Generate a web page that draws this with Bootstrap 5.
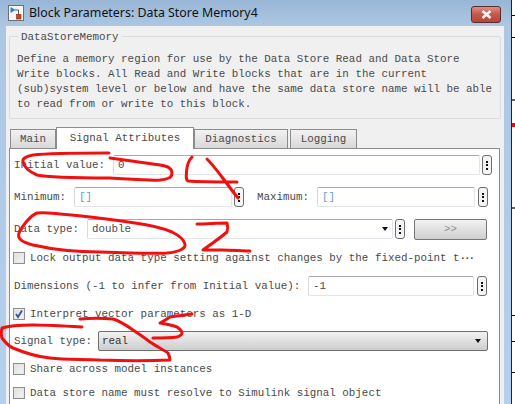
<!DOCTYPE html>
<html lang="en">
<head>
  <meta charset="UTF-8">
  <title>Block Parameters: Data Store Memory4</title>
  <meta name="viewport" content="width=device-width, initial-scale=1">
  <link href="https://cdn.jsdelivr.net/npm/bootstrap@5.3.3/dist/css/bootstrap.min.css" rel="stylesheet">
  <style>
    html, body { height: 404px; overflow: hidden; background: #fff; }
    body { position: relative; font-family: "Liberation Mono", "DejaVu Sans Mono", monospace; font-size: 10.85px; color: #4a4a4a; }
    .dlg-win { width: 511px; height: 404px; overflow: hidden; padding: 0 7px 0 6px; background: linear-gradient(180deg, #98b6d6 0, #adc7e2 26px, #b5d0ec 100%); }
    .dlg-title { height: 26px; padding-left: 2px; gap: 5px; font-family: "Noto Sans", sans-serif; font-size: 12.4px; color: #111; }
    .dlg-close { width: 30px; height: 17px; margin: 3px 3px 0 auto; border: 1px solid #5a2c2c; border-radius: 3px; background: linear-gradient(180deg, #dd8f84 0, #c4584a 50%, #b8463a 100%); }
    .dlg-body { height: 378px; background: #f0f0f0; padding: 10px 3px 0 3px; width: 498px; }
    .grp-box { height: 83px; border: 1px solid #d8dce0; border-radius: 2px; position: relative; padding: 15px 0 0 7px; line-height: 15px; white-space: pre; }
    .grp-title { position: absolute; top: -7px; left: 8px; padding: 0 3px; background: #f0f0f0; line-height: 14px; }
    .tab-row { height: 21px; margin-top: 8px; align-items: flex-end; padding-left: 1px; }
    .tab-item { height: 19px; background: linear-gradient(180deg, #f2f2f2, #d8d8d8); border: 1px solid #8c8c8c; border-bottom: 0; text-align: center; line-height: 18px; }
    .tab-on { height: 22px; background: #fff; position: relative; z-index: 2; margin-bottom: -1px; line-height: 20px; }
    .tab-main { width: 46px; }
    .tab-sig { width: 138px; }
    .tab-diag { width: 94px; }
    .tab-log { width: 67px; margin-left: 2px; }
    .tab-page { background: #fff; border: 1px solid #8c8c8c; border-bottom: 0; width: 491px; height: 258px; padding: 6px 0 0 4px; }
    .fld-row { height: 20px; align-items: center; white-space: pre; }
    .fld-in { height: 20px; background: #fff; border: 1px solid #b4b4b4; border-color: #a8a8a8 #e2e6ea #e2e6ea #d6dade; border-radius: 2px; padding-left: 4px; line-height: 18px; flex: none; }
    .val-blue { color: #5f9fc8; }
    .dots-btn { width: 10px; height: 20px; margin-left: 2px; border: 1px solid #6e6e6e; border-radius: 3px; background: #f4f4f4; flex: none; align-items: center; justify-content: space-evenly; padding: 3px 0; }
    .dots-far { margin-left: 3px; }
    .dots-btn i { display: block; width: 2px; height: 2px; background: #111; }
    .chk-box { width: 12px; height: 12px; flex: none; border: 1px solid #8e8e8e; background: linear-gradient(135deg, #dcdcdc, #f6f6f6); box-shadow: inset 0 0 0 1px #e8e8e8; }
    .chk-row { height: 14px; gap: 5px; align-items: center; white-space: pre; margin-left: -1px; }
    .dot-run { font-weight: bold; letter-spacing: -2px; }
    .drop-arrow { width: 0; height: 0; border-style: solid; border-width: 4px 3.5px 0; border-color: #111 transparent transparent; }
    .more-btn { width: 73px; height: 21px; margin-left: 9px; border: 1px solid #777; border-radius: 2px; background: linear-gradient(180deg, #f2f2f2, #cfcfcf); color: #8a8f96; text-align: center; line-height: 19px; flex: none; }
    .sig-select { width: 390px; height: 20px; flex: none; border: 1px solid #6f6f6f; border-radius: 2px; background: linear-gradient(180deg, #f2f2f2, #cdcdcd); padding: 0 6px 0 3px; line-height: 18px; color: #333; }
    .lb-99 { width: 99px; } .lb-60 { width: 60px; } .lb-73 { width: 73px; } .lb-294 { width: 294px; } .lb-84 { width: 84px; }
    .lb-max { width: 60px; margin-left: 13px; }
    .in-367 { width: 367px; } .in-158 { width: 158px; } .in-306 { width: 306px; } .in-166 { width: 166px; }
    .rw-10 { margin-top: 10px; } .rw-11 { margin-top: 11px; } .rw-12 { margin-top: 12px; }
    .tick-strip { position: absolute; left: 511px; top: 0; width: 4px; height: 404px; background: #fff; border-left: 1px solid #0c2a38; }
    .tick-strip i { position: absolute; left: 0; width: 4px; height: 1px; background: #111; }
    .tick-red { background: #e01010 !important; height: 4px !important; }
    .tick-gray { background: #666 !important; height: 2px !important; }
    .ink-layer { position: absolute; left: 0; top: 0; width: 515px; height: 404px; pointer-events: none; }
    .ink-layer path { fill: none; stroke: #f01010; stroke-width: 3; stroke-linecap: round; stroke-linejoin: round; }
  </style>
</head>
<body>

  <div class="dlg-win">
    <!-- title bar -->
    <div class="dlg-title d-flex align-items-center">
      <svg width="16" height="16" viewBox="0 0 16 16">
        <rect x="0.5" y="0.5" width="15" height="15" fill="#f6f6f6" stroke="#6e6e6e"/>
        <path d="M2.5 2v6l5-3z" fill="#1f86d6"/>
        <path d="M7 5h3.5v5" fill="none" stroke="#333" stroke-width=".8"/>
        <rect x="8.5" y="9.5" width="4.5" height="4.5" fill="#d2451c" stroke="#7a2a10" stroke-width=".6"/>
      </svg>
      <span>Block Parameters: Data Store Memory4</span>
      <div class="dlg-close d-flex align-items-center justify-content-center">
        <svg width="11" height="9" viewBox="0 0 11 9"><path d="M1.5 1 9.5 8M9.5 1 1.5 8" stroke="#fff" stroke-width="2.4" fill="none"/></svg>
      </div>
    </div>

    <div class="dlg-body">
      <div class="grp-box"><span class="grp-title">DataStoreMemory</span><div>Define a memory region for use by the Data Store Read and Data Store
Write blocks. All Read and Write blocks that are in the current
(sub)system level or below and have the same data store name will be able
to read from or write to this block.</div></div>

      <!-- tabs -->
      <div class="tab-row d-flex">
        <div class="tab-item tab-main">Main</div>
        <div class="tab-item tab-on tab-sig">Signal Attributes</div>
        <div class="tab-item tab-diag">Diagnostics</div>
        <div class="tab-item tab-log">Logging</div>
      </div>

      <div class="tab-page">
        <div class="fld-row d-flex">
          <span class="lb-99">Initial value:</span>
          <div class="fld-in in-367">0</div>
          <div class="dots-btn d-flex flex-column"><i></i><i></i><i></i></div>
        </div>

        <div class="fld-row d-flex rw-12">
          <span class="lb-60">Minimum:</span>
          <div class="fld-in in-158 val-blue">[]</div>
          <div class="dots-btn d-flex flex-column"><i></i><i></i><i></i></div>
          <span class="lb-max">Maximum:</span>
          <div class="fld-in in-158 val-blue">[]</div>
          <div class="dots-btn dots-far d-flex flex-column"><i></i><i></i><i></i></div>
        </div>

        <div class="fld-row d-flex rw-12">
          <span class="lb-73">Data type:</span>
          <div class="fld-in in-306 d-flex align-items-center justify-content-between pe-1"><span>double</span><span class="drop-arrow"></span></div>
          <div class="dots-btn d-flex flex-column"><i></i><i></i><i></i></div>
          <div class="more-btn">&gt;&gt;</div>
        </div>

        <div class="chk-row d-flex rw-12">
          <span class="chk-box"></span><span>Lock output data type setting against changes by the fixed-point t<span class="dot-run">···</span></span>
        </div>

        <div class="fld-row d-flex rw-11">
          <span class="lb-294">Dimensions (-1 to infer from Initial value):</span>
          <div class="fld-in in-166">-1</div>
          <div class="dots-btn dots-far d-flex flex-column"><i></i><i></i><i></i></div>
        </div>

        <div class="chk-row d-flex rw-11">
          <span class="chk-box d-flex align-items-center justify-content-center">
            <svg width="10" height="10" viewBox="0 0 10 10"><path d="M2 5 4 8 8 1.5" fill="none" stroke="#2f55a8" stroke-width="1.8"/></svg>
          </span><span>Interpret vector parameters as 1-D</span>
        </div>

        <div class="fld-row d-flex rw-10">
          <span class="lb-84">Signal type:</span>
          <div class="sig-select d-flex align-items-center justify-content-between"><span>real</span><span class="drop-arrow"></span></div>
        </div>

        <div class="chk-row d-flex rw-11">
          <span class="chk-box"></span><span>Share across model instances</span>
        </div>

        <div class="chk-row d-flex rw-10">
          <span class="chk-box"></span><span>Data store name must resolve to Simulink signal object</span>
        </div>
      </div>
    </div>
  </div>

  <!-- background plot axis peeking out on the right -->
  <div class="tick-strip">
    <i style="top:15px"></i><i style="top:37px"></i><i class="tick-gray" style="top:99px"></i><i class="tick-red" style="top:123px"></i>
    <i class="tick-gray" style="top:207px"></i><i style="top:315px"></i><i style="top:341px"></i><i style="top:372px"></i>
  </div>

  <!-- hand drawn red marks -->
  <svg class="ink-layer" viewBox="0 0 515 404">
    <path d="M109 153C85 153 50 153 33 155 26 156 22 159 23 162 24 167 30 172 37 175 50 178 85 178 110 178 130 179 150 181 160 180 168 179 172 178 172 173 172 169 168 166 160 165 145 163 125 160 110 158"/>
    <path d="M192 157C189 160 187 165 186.500 172 186 178 186 180 188 181 200 182 220 182 237 182M207 159C213 165 218 172 222 177 228 185 233 192 238 198"/>
    <path d="M37 213C30 216 22 226 19 233 17 239 22 242 33 245 55 250 80 252 100 252 125 253 150 254 167 253 178 252 186 249 185 244 184 240 180 236 172 232 160 227 150 225 135 223 115 220 85 216 60 214 50 213 43 212 37 213"/>
    <path d="M197 224C207 224 218 223 227 223 228 226 228 229 227 232 220 238 210 245 203 250 210 250 215 250 222 250 232 250 242 251 250 251"/>
    <path d="M82 327C65 326 48 325 33 325 20 325 8 326 2 328 1 332 1 335 2 338 5 342 8 346 13 348 25 353 38 357 50 358 65 360 85 359 100 360 125 361 150 361 170 360 170 357 169 355 168 353 162 349 156 346 150 342 145 338 139 334 133 330 126 325 120 321 113 319 103 318 90 318 80 319"/>
    <path d="M192 314C184 315 177 316 170 317 167 319 164 321 160 323 166 324 172 325 177 327 180 329 182 331 182 333 182 335 180 336 177 337 170 338 160 338 153 338"/>
  </svg>

  <script src="https://cdn.jsdelivr.net/npm/bootstrap@5.3.3/dist/js/bootstrap.bundle.min.js"></script>
</body>
</html>
